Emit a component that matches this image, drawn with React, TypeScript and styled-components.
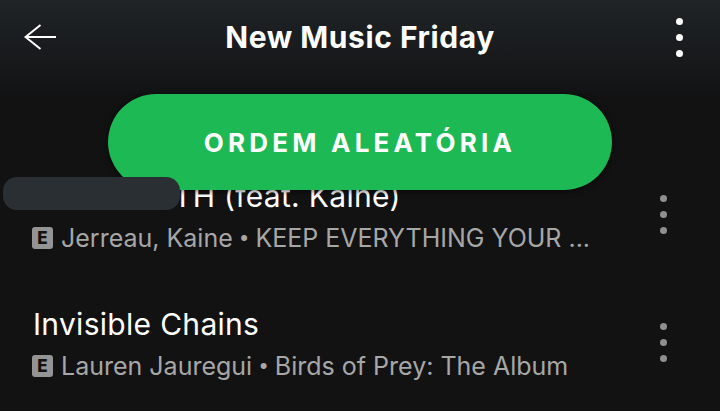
import styled, { createGlobalStyle } from "styled-components";

const GlobalStyle = createGlobalStyle`
  html, body {
    margin: 0;
    height: 100%;
    background-color: #121212;
  }
  #root {
    height: 100%;
  }
`;

const Screen = styled.div`
  position: relative;
  width: 720px;
  height: 411px;
  overflow: hidden;
  background-color: #121212;
  font-family: Inter, "Liberation Sans", sans-serif;
`;

// top bar
const Header = styled.header`
  height: 94px;
  box-sizing: border-box;
  padding: 0 24px 20px;
  display: grid;
  grid-template-columns: 1fr auto 1fr;
  align-items: center;
  background: linear-gradient(#202427, #121314);
`;

const BackIcon = styled.svg`
  width: 32px;
  height: 26px;
  display: block;
`;

const Title = styled.h1`
  margin: 0;
  font-size: 30px;
  line-height: 36px;
  font-weight: 700;
  letter-spacing: 0.55px;
  color: #ffffff;
`;

const Dots = styled.div<{ $color: string; $alignEnd?: boolean }>`
  display: flex;
  flex-direction: column;
  gap: 9px;
  justify-self: ${({ $alignEnd }) => ($alignEnd ? "end" : "auto")};
  margin: ${({ $alignEnd }) => ($alignEnd ? "0 13px 0 0" : "0 0 5px")};
  & > span {
    width: 7px;
    height: 7px;
    border-radius: 50%;
    background-color: ${({ $color }) => $color};
  }
`;

const ShuffleBar = styled.div`
  position: relative;
  z-index: 2;
  display: flex;
  justify-content: center;
`;

const ShuffleButton = styled.button`
  width: 504px;
  height: 96px;
  padding-left: 6px;
  border: none;
  border-radius: 48px;
  background-color: #1db954;
  box-shadow: 0 1px 6px rgba(0, 0, 0, 0.6);
  color: #ffffff;
  font-family: inherit;
  font-size: 26px;
  font-weight: 700;
  letter-spacing: 4.2px;
`;

// track list, scrolled up under the button
const TrackList = styled.div`
  margin-top: -15px;
  display: flex;
  flex-direction: column;
  gap: 44px;
`;

const Track = styled.div`
  height: 84px;
  padding: 0 53px 0 33px;
  display: grid;
  grid-template-columns: 1fr auto;
  align-items: center;
`;

const TrackInfo = styled.div`
  min-width: 0;
  display: flex;
  flex-direction: column;
  gap: 2px;
`;

const TrackName = styled.div<{ $indent?: number }>`
  padding-left: ${({ $indent }) => $indent || 0}px;
  font-size: 30px;
  line-height: 40px;
  letter-spacing: 0.3px;
  color: #ffffff;
`;

const TrackMeta = styled.div`
  display: flex;
  align-items: center;
  gap: 6px;
  font-size: 25px;
  line-height: 40px;
  color: #a7a7a7;
  white-space: nowrap;
`;

const Bullet = styled.span`
  font-size: 19px;
`;

const ExplicitBadge = styled.span`
  width: 21px;
  height: 22px;
  margin: 0 2px 0 -1px;
  flex: none;
  display: flex;
  align-items: center;
  justify-content: center;
  border-radius: 3px;
  background-color: #949494;
  color: #121212;
  font-size: 17px;
  font-weight: 800;
  line-height: 1;
`;

// 가림 처리된 부분
const Redaction = styled.div`
  position: absolute;
  z-index: 3;
  left: 3px;
  top: 177px;
  width: 177px;
  height: 33px;
  border-radius: 14px;
  background-color: #2a2f33;
`;

const tracks = [
  {
    name: "TH (feat. Kaine)",
    indent: 140,
    artist: "Jerreau, Kaine",
    album: "KEEP EVERYTHING YOUR ...",
  },
  {
    name: "Invisible Chains",
    artist: "Lauren Jauregui",
    album: "Birds of Prey: The Album",
  },
];

export default function App() {
  return (
    <Screen>
      <GlobalStyle />
      <Header>
        <BackIcon viewBox="0 0 32 26" fill="none" stroke="#ffffff" strokeWidth="2">
          <path d="M32 13H2M16.5 1L1.5 13l15 12" />
        </BackIcon>
        <Title>New Music Friday</Title>
        <Dots $color="#ffffff" $alignEnd>
          <span />
          <span />
          <span />
        </Dots>
      </Header>
      <ShuffleBar>
        <ShuffleButton>ORDEM ALEATÓRIA</ShuffleButton>
      </ShuffleBar>
      <TrackList>
        {tracks.map((track) => (
          <Track key={track.artist}>
            <TrackInfo>
              <TrackName $indent={track.indent}>{track.name}</TrackName>
              <TrackMeta>
                <ExplicitBadge>E</ExplicitBadge>
                <span>{track.artist}</span>
                <Bullet>•</Bullet>
                <span>{track.album}</span>
              </TrackMeta>
            </TrackInfo>
            <Dots $color="#8f8f8f">
              <span />
              <span />
              <span />
            </Dots>
          </Track>
        ))}
      </TrackList>
      <Redaction />
    </Screen>
  );
}
